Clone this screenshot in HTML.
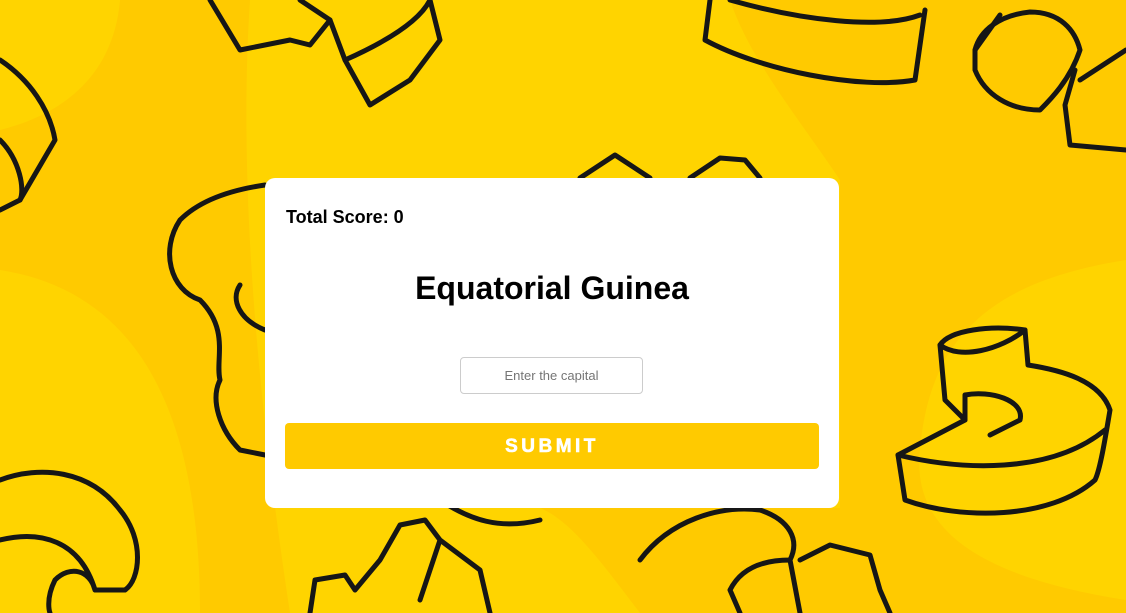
<!DOCTYPE html>
<html><head><style>
html,body{margin:0;padding:0;width:1126px;height:613px;overflow:hidden;background:#ffd400;font-family:"Liberation Sans",Arial,sans-serif}
svg.bg{position:absolute;left:0;top:0}
.card{position:absolute;left:265px;top:178px;width:574px;height:330px;background:#fff;border-radius:10px}
.score{position:absolute;left:21px;top:29px;font-size:18px;font-weight:bold;color:#000}
.country{position:absolute;left:0;width:100%;top:92px;text-align:center;font-size:32px;font-weight:bold;color:#000}
.inp{position:absolute;left:195px;top:179px;width:183px;height:37px;border:1px solid #ccc;border-radius:4px;box-sizing:border-box;font-size:13px;color:#757575;text-align:center;line-height:35px}
.btn{position:absolute;left:20px;top:245px;width:534px;height:46px;background:#ffca00;border-radius:4px;color:#fff;font-weight:900;font-size:19px;letter-spacing:3.5px;text-align:center;line-height:48px;-webkit-text-stroke:0.6px #fff}
</style></head><body>
<svg class="bg" width="1126" height="613" viewBox="0 0 1126 613">
<path d="M0 130C80 110 115 60 120 0H250C240 150 250 350 290 613H200C200 400 130 290 0 270Z" fill="#ffca00"/>
<path d="M730 0H1126V260C1000 280 930 330 920 450 910 540 1000 580 1126 600V613H640C600 560 570 520 540 508H840V180C800 120 750 60 730 0Z" fill="#ffca00"/>
<g fill="none" stroke="#161616" stroke-width="5" stroke-linejoin="round" stroke-linecap="round">
<path d="M210 0L240 50 290 40 310 45 330 20 300 0"/>
<path d="M330 20L345 60 370 105 410 80 440 40 430 0"/>
<path d="M345 60C390 40 420 20 430 0"/>
<path d="M710 0L705 40C760 70 860 90 915 80L925 10"/>
<path d="M730 0C800 20 880 30 920 15"/>
<path d="M975 50C980 30 1000 15 1030 12 1060 12 1075 30 1080 50 1070 80 1050 100 1040 110 1010 110 985 95 975 70Z"/>
<path d="M1000 15L975 50M1075 70L1065 105 1070 145 1126 150M1080 80 1126 50"/>
<path d="M0 60C30 80 50 110 55 140L20 200 0 210"/>
<path d="M0 140C20 160 25 190 20 200"/>
<path d="M265 185C230 190 200 200 180 220 160 250 170 290 200 300 230 330 215 360 220 380 210 400 220 430 240 450L265 455"/>
<path d="M240 285C230 300 240 320 265 330"/>
<path d="M580 178L615 155 650 178M690 178 720 158 745 160 760 178"/>
<path d="M940 345C950 330 990 325 1025 330L1028 365C1060 370 1100 380 1110 410 1105 440 1100 470 1095 480 1050 520 960 520 905 500L898 455 965 420 965 395C990 390 1025 400 1020 420L990 435"/>
<path d="M940 345 945 400 965 420M1025 330C1000 350 960 360 940 345M898 455C960 470 1050 475 1105 430"/>
<path d="M0 480C40 465 90 470 120 510 145 540 140 580 125 590L95 590C90 570 70 565 55 580 45 600 50 613 50 613M0 540C40 530 80 540 95 590"/>
<path d="M310 613 315 580 345 575 355 590 380 560 400 525 425 520 440 540 480 570 490 613M440 540 420 600"/>
<path d="M440 500C470 520 500 530 540 520"/>
<path d="M640 560C670 520 720 505 760 510 790 520 800 540 790 560 760 560 740 570 730 590L740 613M800 560 830 545 870 555 880 590 890 613M790 560 800 613"/>
</g>
</svg>
<div class="card">
<div class="score">Total Score: 0</div>
<div class="country">Equatorial Guinea</div>
<div class="inp">Enter the capital</div>
<div class="btn">SUBMIT</div>
</div>
</body></html>
